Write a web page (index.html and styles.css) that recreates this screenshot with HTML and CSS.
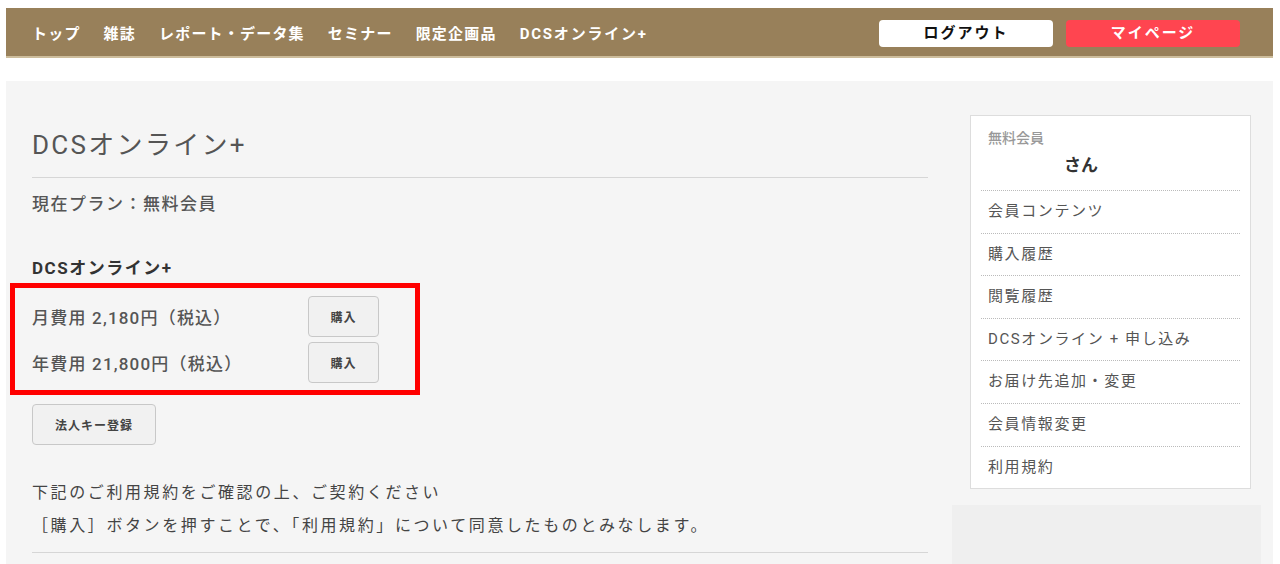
FILE: index.html
```html
<!DOCTYPE html>
<html lang="ja">

<head>
    <meta charset="utf-8">
    <meta name="viewport" content="width=device-width, initial-scale=1.0">
    <title>DCSオンライン+</title>
    <link rel="stylesheet" href="styles.css">
</head>

<body>
    <div class="side">

        <header class="topbar">
            <nav class="gnav">
                <a href="#">トップ</a>
                <a href="#">雑誌</a>
                <a href="#">レポート・データ集</a>
                <a href="#">セミナー</a>
                <a href="#">限定企画品</a>
                <a href="#">DCSオンライン+</a>
            </nav>
            <div class="userbtns">
                <a href="#" class="btn-logout">ログアウト</a>
                <a href="#" class="btn-mypage">マイページ</a>
            </div>
        </header>

        <div class="wrap">
            <main class="main">
                <h1>DCSオンライン+</h1>
                <p class="plan">現在プラン：無料会員</p>

                <h2>DCSオンライン+</h2>
                <div class="prices">
                    <div class="price-row">
                        <span>月費用 2,180円（税込）</span>
                        <button class="btn">購入</button>
                    </div>
                    <div class="price-row">
                        <span>年費用 21,800円（税込）</span>
                        <button class="btn">購入</button>
                    </div>
                </div>
                <button class="btn btn-key">法人キー登録</button>

                <div class="notice">
                    <p>下記のご利用規約をご確認の上、ご契約ください</p>
                    <p>［購入］ボタンを押すことで、「利用規約」について同意したものとみなします。</p>
                </div>
            </main>

            <aside class="sidebar">
                <div class="memberbox">
                    <div class="member-head">
                        <div class="rank">無料会員</div>
                        <div class="name">さん</div>
                    </div>
                    <ul class="member-menu">
                        <li><a href="#">会員コンテンツ</a></li>
                        <li><a href="#">購入履歴</a></li>
                        <li><a href="#">閲覧履歴</a></li>
                        <li><a href="#">DCSオンライン + 申し込み</a></li>
                        <li><a href="#">お届け先追加・変更</a></li>
                        <li><a href="#">会員情報変更</a></li>
                        <li><a href="#">利用規約</a></li>
                    </ul>
                </div>
                <div class="sidebox"></div>
            </aside>
        </div>

    </div>
</body>

</html>
```

FILE: styles.css
```css
body {
    margin: 0;
    background-color: #fff;
    font-family: Roboto, "Noto Sans CJK JP", sans-serif;
    color: #555;
}

a {
    text-decoration: none;
}

.side {
    padding: 8px 7px 0 6px;
}

/* ヘッダー */
.topbar {
    display: flex;
    align-items: center;
    justify-content: space-between;
    height: 48px;
    background-color: #98805a;
    border-bottom: 2px solid #cdbd9c;
    padding: 0 33px 0 26px;
}

.gnav {
    display: flex;
    gap: 23px;
}

.gnav a {
    color: #fff;
    font-weight: bold;
    font-size: 15px;
    letter-spacing: 1.2px;
}

.gnav a:last-child {
    letter-spacing: 1.8px;
}

.userbtns {
    display: flex;
    gap: 13px;
    padding-top: 3px;
}

.userbtns a {
    display: block;
    width: 174px;
    height: 27px;
    line-height: 27px;
    text-align: center;
    border-radius: 4px;
    font-weight: bold;
    font-size: 15px;
    letter-spacing: 2px;
}

.btn-logout {
    background-color: #fff;
    color: #111;
}

.btn-mypage {
    background-color: #ff4550;
    color: #fff;
}

/* 本文 */
.wrap {
    display: flex;
    margin-top: 23px;
    background-color: #f5f5f5;
    height: 483px;
    overflow: hidden;
}

.main {
    width: 896px;
    padding: 34px 0 0 26px;
}

h1 {
    margin: 11px 0 0;
    font-size: 26px;
    font-weight: normal;
    line-height: 38px;
    padding-bottom: 13px;
    border-bottom: 1px solid #d6d6d6;
    letter-spacing: 2.3px;
}

.plan {
    margin: 14px 0 0;
    font-size: 17px;
    line-height: 25px;
    font-weight: 500;
    letter-spacing: 1.5px;
}

h2 {
    margin: 39px 0 0;
    font-size: 17px;
    line-height: 25px;
    color: #333;
    letter-spacing: 1.5px;
}

.prices {
    position: relative;
    margin-top: 15px;
    width: 347px;
    display: flex;
    flex-direction: column;
    gap: 5px;
}

.prices::before {
    content: "";
    position: absolute;
    left: -22px;
    top: -13px;
    width: 400px;
    height: 102px;
    border: 5px solid #f00;
}

.price-row {
    display: flex;
    align-items: center;
    justify-content: space-between;
    font-size: 17px;
    font-weight: 500;
    letter-spacing: 1.2px;
}

.btn {
    font-family: inherit;
    background-color: #f1f1f1;
    border: 1px solid #c8c8c8;
    border-radius: 4px;
    color: #444;
    font-size: 12px;
    font-weight: bold;
    height: 41px;
    width: 71px;
    letter-spacing: 1px;
    cursor: pointer;
}

.btn-key {
    display: block;
    width: 124px;
    margin-top: 21px;
}

.notice {
    margin-top: 31px;
    padding-bottom: 10px;
    border-bottom: 1px solid #d6d6d6;
}

.notice p {
    margin: 0;
    font-size: 16px;
    line-height: 33px;
    color: #444;
    letter-spacing: 2.6px;
}

/* サイドバー */
.sidebar {
    width: 309px;
    margin-left: 24px;
    padding-top: 34px;
}

.memberbox {
    margin: 0 10px 0 18px;
    background-color: #fff;
    border: 1px solid #ddd;
    padding: 8px 10px 0;
}

.member-head {
    padding: 0 0 12px 7px;
    border-bottom: 1px dotted #bbb;
}

.rank {
    color: #999;
    font-size: 14px;
    font-weight: 500;
    line-height: 28px;
}

.name {
    color: #333;
    font-size: 17px;
    font-weight: bold;
    line-height: 26px;
    padding-left: 76px;
}

.member-menu {
    list-style: none;
    margin: 0;
    padding: 0;
}

.member-menu li {
    border-bottom: 1px dotted #bbb;
}

.member-menu li:last-child {
    border-bottom: none;
}

.member-menu a {
    display: block;
    padding: 0 7px;
    line-height: 41.6px;
    color: #555;
    font-size: 15px;
    letter-spacing: 1.6px;
}

.sidebox {
    margin-top: 16px;
    height: 100px;
    background-color: #efefef;
}
```
